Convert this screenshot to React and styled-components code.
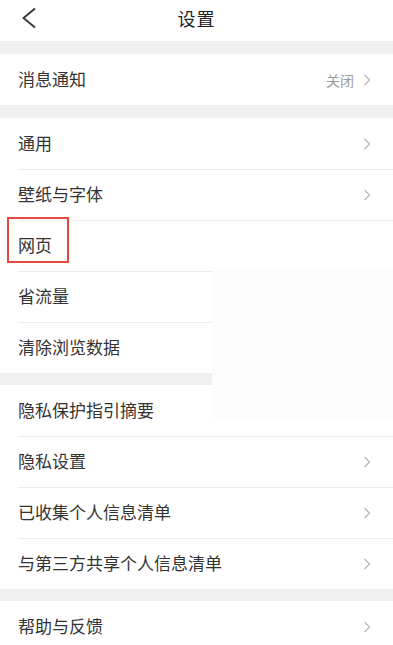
import React from "react"
import styled, { createGlobalStyle } from "styled-components"

const GlobalStyle = createGlobalStyle`
    html, body {
        margin: 0;
        padding: 0;
        background: #ffffff;
        font-family: "Noto Sans CJK SC", "Noto Sans", sans-serif;
    }
`

const groups = [
    { gap: 13, items: [{ label: "消息通知", value: "关闭", arrow: true }] },
    {
        gap: 13,
        items: [
            { label: "通用", arrow: true },
            { label: "壁纸与字体", arrow: true },
            { label: "网页", marked: true },
            { label: "省流量" },
            { label: "清除浏览数据" },
        ],
    },
    {
        gap: 12,
        items: [
            { label: "隐私保护指引摘要" },
            { label: "隐私设置", arrow: true },
            { label: "已收集个人信息清单", arrow: true },
            { label: "与第三方共享个人信息清单", arrow: true },
        ],
    },
    { gap: 12, items: [{ label: "帮助与反馈", arrow: true }] },
]

const Chevron = () => (
    <svg width="8" height="12" viewBox="0 0 8 12">
        <polyline points="1.5,1 6.5,6 1.5,11" fill="none" stroke="#b4b4b4" strokeWidth="1.2" />
    </svg>
)

const Settings = () => {
    return (
        <Page>
            <GlobalStyle />
            <Header>
                <BackButton>
                    <svg width="16" height="22" viewBox="0 0 16 22">
                        <polyline points="14,1.5 2.5,11 14,20.5" fill="none" stroke="#333" strokeWidth="1.8" />
                    </svg>
                </BackButton>
                <Title>设置</Title>
            </Header>
            {groups.map((group, gi) => (
                <React.Fragment key={gi}>
                    <Band $height={group.gap} />
                    <Group>
                        {group.items.map((item) => (
                            <Row key={item.label}>
                                <Label>{item.label}</Label>
                                <Side>
                                    {item.value && <Value>{item.value}</Value>}
                                    {item.arrow && <Chevron />}
                                </Side>
                                {item.marked && <Mark />}
                            </Row>
                        ))}
                    </Group>
                </React.Fragment>
            ))}
            <Patch />
        </Page>
    )
}

const Page = styled.div`
    position: relative;
    width: 393px;
    height: 645px;
    overflow: hidden;
    background: #ffffff;
`

const Header = styled.div`
    height: 41px;
    display: flex;
    align-items: center;
    justify-content: center;
    position: relative;
    background: #ffffff;
`

const BackButton = styled.div`
    position: absolute;
    left: 21px;
    top: 7px;
    display: flex;
`

const Title = styled.div`
    font-size: 18px;
    line-height: 1;
    color: #222;
    letter-spacing: 1px;
    margin-top: -6px;
`

const Band = styled.div`
    height: ${(p) => p.$height}px;
    background: #f0f0f0;
`

const Group = styled.div`
    background: #ffffff;
`

const Row = styled.div`
    position: relative;
    height: 51px;
    display: flex;
    align-items: center;
    justify-content: space-between;
    padding: 0 22px 0 18px;

    & + &::before {
        content: "";
        position: absolute;
        left: 18px;
        right: 0;
        top: 0;
        height: 1px;
        background: #ececec;
    }
`

const Label = styled.div`
    font-size: 17px;
    line-height: 1;
    color: #333;
    margin-top: -2px;
`

const Mark = styled.div`
    position: absolute;
    left: 7px;
    top: -3px;
    width: 58px;
    height: 42px;
    border: 2px solid #e5493a;
`

const Side = styled.div`
    display: flex;
    align-items: center;
    gap: 9px;
`

const Value = styled.span`
    font-size: 14px;
    line-height: 1;
    color: #9a9a9a;
`

const Patch = styled.div`
    position: absolute;
    left: 212px;
    top: 268px;
    width: 181px;
    height: 150px;
    background: #fcfcfc;
`

export default Settings
